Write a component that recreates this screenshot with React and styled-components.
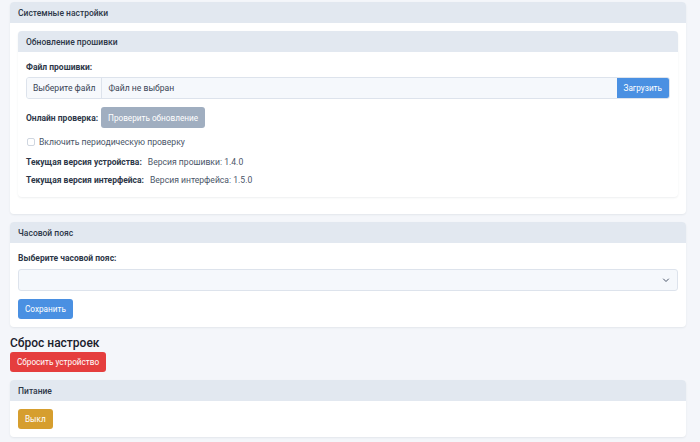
import React, { useState } from "react"
import styled, { createGlobalStyle } from "styled-components"

const GlobalStyle = createGlobalStyle`
  html, body {
    margin: 0;
    padding: 0;
    background: #f4f6fa;
    font-family: Roboto, "Noto Sans", sans-serif;
    color: #2d3748;
  }
  * { box-sizing: border-box; }
`

const Page = styled.div`
  padding: 2px 14px 4px 10px;
  font-size: 8.6px;
`

const Card = styled.section`
  background: #fff;
  border-radius: 4px;
  box-shadow: 0 1px 2px rgba(30, 45, 70, 0.08);
  overflow: hidden;
  margin-bottom: ${props => props.$gap ?? 8}px;
`

const CardHeader = styled.div`
  height: 21px;
  display: flex;
  align-items: center;
  padding: 0 8px;
  background: #e2e8f0;
  font-weight: 500;
  font-size: 8.5px;
  color: #2d3748;
`

const CardBody = styled.div`
  padding: ${props => props.$pad || "8px"};
  display: flex;
  flex-direction: column;
`

const Label = styled.div`
  font-weight: 700;
  font-size: 8.5px;
  line-height: 14px;
  color: #2d3748;
`

const InputGroup = styled.div`
  margin-top: 3px;
  height: 22px;
  display: flex;
  border: 1px solid #dde3ec;
  border-radius: 3px;
  background: #f5f8fc;
  overflow: hidden;
`

const FileButton = styled.span`
  display: flex;
  align-items: center;
  padding: 0 6px;
  background: #f7f9fc;
  border-right: 1px solid #dde3ec;
  color: #3a4556;
`

const FileName = styled.span`
  flex: 1;
  display: flex;
  align-items: center;
  padding: 0 6px;
  color: #3a4556;
`

const Button = styled.button`
  font-family: inherit;
  font-size: 8.2px;
  border: none;
  border-radius: 3px;
  padding: 0 7px;
  height: ${props => props.$h || 20}px;
  color: #fff;
  background: ${props => props.$color};
  cursor: pointer;
  align-self: flex-start;
`

const UploadButton = styled(Button)`
  border-radius: 0;
  height: 100%;
  padding: 0 7px;
`

const Row = styled.div`
  display: flex;
  align-items: center;
  gap: ${props => props.$gap ?? 3}px;
  margin-top: ${props => props.$mt || 0}px;
`

const Check = styled.span`
  width: 8px;
  height: 8px;
  border: 1px solid #cfd6e0;
  border-radius: 2px;
  background: #fff;
  margin-left: 1px;
`

const MutedText = styled.span`
  color: #4a5568;
  line-height: 14px;
`

const InfoRow = styled.div`
  display: flex;
  gap: 6px;
  line-height: 14px;
  margin-top: ${props => props.$mt || 0}px;
`

const Select = styled.div`
  margin-top: 4px;
  height: 22px;
  border: 1px solid #dde3ec;
  border-radius: 3px;
  background: #f5f8fc;
  display: flex;
  align-items: center;
  justify-content: flex-end;
  padding-right: 7px;
  color: #4a5568;
`

const SectionTitle = styled.h3`
  margin: 8px 0 1px;
  font-size: 12px;
  font-weight: 500;
  line-height: 16px;
  color: #1a202c;
`

const Actions = styled.div`
  display: flex;
  margin-bottom: 8px;
`

export default function App() {
  const [periodic, setPeriodic] = useState(false)

  return (
    <>
      <GlobalStyle />
      <Page>
        <Card>
          <CardHeader>Системные настройки</CardHeader>
          <CardBody $pad="8px 8px 17px">
            <Card $gap={0}>
              <CardHeader>Обновление прошивки</CardHeader>
              <CardBody $pad="8px 8px 10px">
                <Label>Файл прошивки:</Label>
                <InputGroup>
                  <FileButton>Выберите файл</FileButton>
                  <FileName>Файл не выбран</FileName>
                  <UploadButton $color="#4a90e2">Загрузить</UploadButton>
                </InputGroup>
                <Row $mt={8}>
                  <Label>Онлайн проверка:</Label>
                  <Button $color="#a0aec0" $h={21}>Проверить обновление</Button>
                </Row>
                <Row $mt={7} $gap={4} onClick={() => setPeriodic(!periodic)}>
                  <Check />
                  <MutedText>Включить периодическую проверку</MutedText>
                </Row>
                <InfoRow $mt={6}>
                  <Label>Текущая версия устройства:</Label>
                  <MutedText>Версия прошивки: 1.4.0</MutedText>
                </InfoRow>
                <InfoRow $mt={4}>
                  <Label>Текущая версия интерфейса:</Label>
                  <MutedText>Версия интерфейса: 1.5.0</MutedText>
                </InfoRow>
              </CardBody>
            </Card>
          </CardBody>
        </Card>

        <Card $gap={0}>
          <CardHeader>Часовой пояс</CardHeader>
          <CardBody>
            <Label>Выберите часовой пояс:</Label>
            <Select>
              <svg width="8" height="8" viewBox="0 0 16 16">
                <path d="M3 6l5 5 5-5" fill="none" stroke="#4a5568" strokeWidth="2" strokeLinecap="round" strokeLinejoin="round" />
              </svg>
            </Select>
            <Row $mt={8}>
              <Button $color="#4a90e2">Сохранить</Button>
            </Row>
          </CardBody>
        </Card>

        <SectionTitle>Сброс настроек</SectionTitle>
        <Actions>
          <Button $color="#e53e3e">Сбросить устройство</Button>
        </Actions>

        <Card>
          <CardHeader>Питание</CardHeader>
          <CardBody>
            <Button $color="#d69e2e">Выкл</Button>
          </CardBody>
        </Card>
      </Page>
    </>
  )
}
